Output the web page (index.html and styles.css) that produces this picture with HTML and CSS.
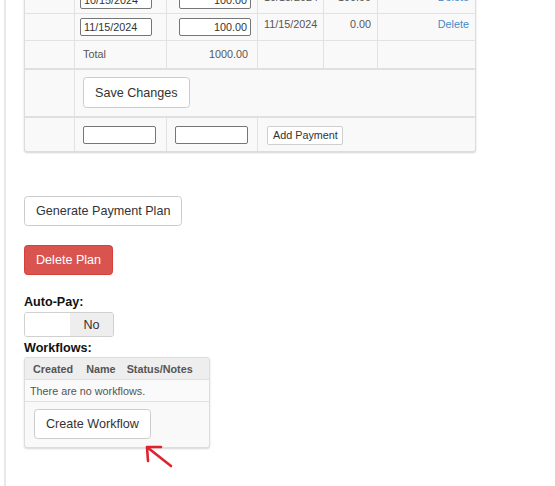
FILE: index.html
```html
<!DOCTYPE html>
<html>
<head>
<meta charset="utf-8">
<link rel="stylesheet" href="styles.css">
</head>
<body>
<div class="page">
  <div class="tbl">
    <div class="row r1">
      <div class="c c1"></div>
      <div class="c c2"><input class="inp in-date2" value="10/15/2024"></div>
      <div class="c c3"><input class="inp in-amt2 right" value="100.00"></div>
      <div class="c c4 txt">10/15/2024</div>
      <div class="c c5 txt right">100.00</div>
      <div class="c c6 txt right"><a class="link">Delete</a></div>
    </div>
    <div class="row r2">
      <div class="c c1"></div>
      <div class="c c2"><input class="inp in-date2" value="11/15/2024"></div>
      <div class="c c3"><input class="inp in-amt2 right" value="100.00"></div>
      <div class="c c4 txt">11/15/2024</div>
      <div class="c c5 txt right">0.00</div>
      <div class="c c6 txt right"><a class="link">Delete</a></div>
    </div>
    <div class="row r3">
      <div class="c c1"></div>
      <div class="c c2 mid">Total</div>
      <div class="c c3 mid right total">1000.00</div>
      <div class="c c4"></div>
      <div class="c c5"></div>
      <div class="c c6"></div>
    </div>
    <div class="row r4">
      <div class="c c1"></div>
      <div class="c span"><button class="btn save">Save Changes</button></div>
    </div>
    <div class="row r5">
      <div class="c c1"></div>
      <div class="c c2 mid"><input class="inp in-new"></div>
      <div class="c c3 mid"><input class="inp in-new"></div>
      <div class="c rest mid"><button class="small-btn">Add Payment</button></div>
    </div>
  </div>

  <button class="btn gen">Generate Payment Plan</button>
  <button class="btn danger">Delete Plan</button>

  <div class="label autopay">Auto-Pay:</div>
  <div class="toggle"><span class="t-off"></span><span class="t-no">No</span></div>

  <div class="label">Workflows:</div>
  <div class="wf">
    <div class="wf-head"><span>Created</span><span>Name</span><span>Status/Notes</span></div>
    <div class="wf-row">There are no workflows.</div>
    <div class="wf-foot"><button class="btn create">Create Workflow</button></div>
  </div>

  <svg class="arrow" width="40" height="40" viewBox="0 0 40 40">
    <polyline points="17,3 3,3 4,17" fill="none" stroke="#e0212f" stroke-width="2.6" stroke-linecap="round" stroke-linejoin="round"/>
    <line x1="3.5" y1="3.5" x2="27" y2="22" stroke="#e0212f" stroke-width="2.6" stroke-linecap="round"/>
  </svg>
</div>
</body>
</html>
```

FILE: styles.css
```css
html, body {
  margin: 0;
  padding: 0;
  background: #fff;
}
body {
  font-family: "Liberation Sans", Arial, sans-serif;
  color: #333;
  overflow: hidden;
}
.page {
  position: relative;
  display: flow-root;
  margin-left: 4px;
  border-left: 2px solid #e8e8e8;
  padding-left: 18px;
  height: 486px;
  box-sizing: border-box;
}
.tbl {
  width: 452px;
  box-sizing: border-box;
  margin-top: -14px;
  border: 1px solid #dddddd;
  border-radius: 0 0 3px 3px;
  background: #f9f9f9;
  box-shadow: 0 1px 2px rgba(0,0,0,0.18);
  font-size: 10.8px;
  color: #555;
}
.row {
  display: flex;
  border-bottom: 1px solid #e2e2e2;
}
.row.r1 { height: 26px; }
.row.r2 { height: 26px; }
.row.r3 { height: 27px; border-bottom: 2px solid #e0e0e0; }
.row.r4 { height: 46px; border-bottom: 2px solid #e0e0e0; }
.row.r5 { height: 33px; border-bottom: none; }
.c {
  box-sizing: border-box;
  border-right: 1px solid #e2e2e2;
  display: flex;
  align-items: flex-start;
}
.c1 { width: 50px; }
.c2 { width: 92px; }
.c3 { width: 91px; }
.c4 { width: 66px; }
.c5 { width: 54px; }
.c6 { width: 97px; border-right: none; }
.span { flex: 1; border-right: none; }
.rest { flex: 1; border-right: none; }
.txt { padding: 3px 6px 0 6px; line-height: 14px; }
.right { justify-content: flex-end; text-align: right; }
.mid { align-items: center; }
.c2.mid { padding-left: 8px; }
.r3 .mid { padding-bottom: 1px; }
.total { padding-right: 9px; }
.link { color: #428bca; text-decoration: none; }
.inp {
  font-family: "Liberation Sans", Arial, sans-serif;
  font-size: 10.8px;
  color: #333;
  box-sizing: border-box;
  border: 1px solid #767676;
  border-radius: 2px;
  background: #fff;
  padding: 0 3px;
  margin: 0;
  outline: none;
}
.inp.right { text-align: right; }
.in-date2 { width: 72px; height: 18px; margin: 4px 0 0 5px; }
.in-amt2 { width: 72px; height: 18px; margin: 4px 0 0 12px; }
.in-new { width: 73px; height: 18px; }
.c3.mid { padding-left: 8px; }
.rest.mid { padding-left: 9px; }

.btn {
  display: block;
  font-family: "Liberation Sans", Arial, sans-serif;
  font-size: 12.6px;
  line-height: 18px;
  padding: 5px 11px;
  border: 1px solid #cccccc;
  border-radius: 3.6px;
  background: #fff;
  color: #333;
  margin: 0;
  cursor: pointer;
}
.save { margin: 7px 0 0 8px; height: 31px; padding: 5px 11px; }
.small-btn {
  font-family: "Liberation Sans", Arial, sans-serif;
  font-size: 10.8px;
  line-height: 13px;
  padding: 2px 4px 2px 5px;
  border: 1px solid #cfcfcf;
  border-radius: 2px;
  background: #fff;
  color: #333;
  margin: 1px 0 0 0;
}
.gen { margin-top: 44px; }
.danger {
  margin-top: 19px;
  background: #d9534f;
  border-color: #d43f3a;
  color: #fff;
}
.label {
  font-size: 12.6px;
  font-weight: bold;
  line-height: 18px;
  color: #111;
}
.autopay { margin-top: 18px; margin-bottom: 1px; }
.toggle {
  display: flex;
  width: 90px;
  height: 25px;
  box-sizing: border-box;
  border: 1px solid #d0d0d0;
  border-radius: 3px;
  overflow: hidden;
  font-size: 12.6px;
  margin-bottom: 2px;
}
.t-off { width: 45px; background: #fff; }
.t-no {
  flex: 1;
  background: #eeeeee;
  display: flex;
  align-items: center;
  justify-content: center;
  color: #333;
}
.wf {
  width: 186px;
  box-sizing: border-box;
  border: 1px solid #dddddd;
  border-radius: 3px;
  box-shadow: 0 1px 2px rgba(0,0,0,0.16);
  background: #f9f9f9;
  font-size: 10.8px;
  color: #555;
  overflow: hidden;
}
.wf-head {
  height: 21px;
  background: #eeeeee;
  border-bottom: 1px solid #e0e0e0;
  display: flex;
  align-items: center;
  gap: 13px;
  padding-left: 8px;
  font-weight: bold;
  color: #555;
}
.wf-head span:nth-child(3) { margin-left: -2px; }
.wf-row {
  height: 21px;
  border-bottom: 1px solid #e0e0e0;
  display: flex;
  align-items: center;
  padding-left: 5px;
  background: #fafafa;
}
.wf-foot {
  padding: 7px 0 8px 9px;
}
.create { height: 30px; }
.arrow {
  position: absolute;
  left: 138px;
  top: 444px;
}
```
